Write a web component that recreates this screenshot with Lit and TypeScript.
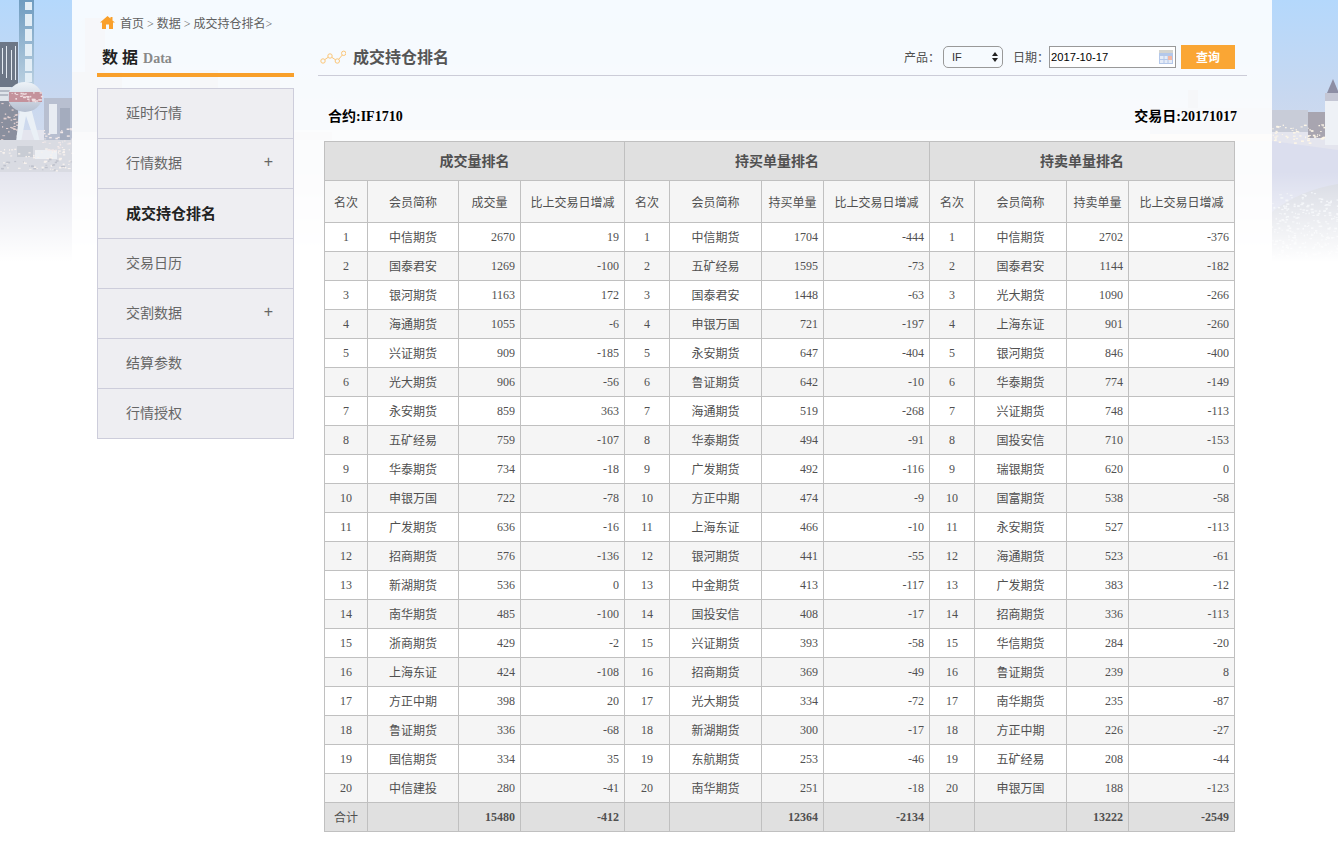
import { LitElement, html, css, svg } from 'lit';
import { customElement } from 'lit/decorators.js';

type Row = [string, number, number];

const VOLUME: Row[] = [
  ['中信期货', 2670, 19], ['国泰君安', 1269, -100], ['银河期货', 1163, 172], ['海通期货', 1055, -6],
  ['兴证期货', 909, -185], ['光大期货', 906, -56], ['永安期货', 859, 363], ['五矿经易', 759, -107],
  ['华泰期货', 734, -18], ['申银万国', 722, -78], ['广发期货', 636, -16], ['招商期货', 576, -136],
  ['新湖期货', 536, 0], ['南华期货', 485, -100], ['浙商期货', 429, -2], ['上海东证', 424, -108],
  ['方正中期', 398, 20], ['鲁证期货', 336, -68], ['国信期货', 334, 35], ['中信建投', 280, -41],
];
const BUY: Row[] = [
  ['中信期货', 1704, -444], ['五矿经易', 1595, -73], ['国泰君安', 1448, -63], ['申银万国', 721, -197],
  ['永安期货', 647, -404], ['鲁证期货', 642, -10], ['海通期货', 519, -268], ['华泰期货', 494, -91],
  ['广发期货', 492, -116], ['方正中期', 474, -9], ['上海东证', 466, -10], ['银河期货', 441, -55],
  ['中金期货', 413, -117], ['国投安信', 408, -17], ['兴证期货', 393, -58], ['招商期货', 369, -49],
  ['光大期货', 334, -72], ['新湖期货', 300, -17], ['东航期货', 253, -46], ['南华期货', 251, -18],
];
const SELL: Row[] = [
  ['中信期货', 2702, -376], ['国泰君安', 1144, -182], ['光大期货', 1090, -266], ['上海东证', 901, -260],
  ['银河期货', 846, -400], ['华泰期货', 774, -149], ['兴证期货', 748, -113], ['国投安信', 710, -153],
  ['瑞银期货', 620, 0], ['国富期货', 538, -58], ['永安期货', 527, -113], ['海通期货', 523, -61],
  ['广发期货', 383, -12], ['招商期货', 336, -113], ['华信期货', 284, -20], ['鲁证期货', 239, 8],
  ['南华期货', 235, -87], ['方正中期', 226, -27], ['五矿经易', 208, -44], ['申银万国', 188, -123],
];

const MENU = [
  { name: '延时行情' },
  { name: '行情数据', more: true },
  { name: '成交持仓排名', active: true },
  { name: '交易日历' },
  { name: '交割数据', more: true },
  { name: '结算参数' },
  { name: '行情授权' },
];

const COLS = [43, 91, 62, 104, 45, 92, 62, 106, 45, 92, 62, 106];

// speckle for the lit shore and the city lights
let seed = 7;
const rnd = () => {
  seed = (seed * 16807) % 2147483647;
  return seed / 2147483647;
};
const dots = (x0: number, x1: number, y0: number, y1: number, n: number, fill: string) => {
  const out = [];
  for (let i = 0; i < n; i++) {
    const x = x0 + rnd() * (x1 - x0);
    const y = y0 + rnd() * (y1 - y0);
    out.push(svg`<rect x=${x} y=${y} width=${1 + rnd() * 2} height=${0.8 + rnd()} fill=${fill} />`);
  }
  return out;
};

@customElement('app-root')
export class AppRoot extends LitElement {
  static styles = css`
    :host {
      display: block;
      position: relative;
      width: 1338px;
      height: 842px;
      overflow: hidden;
      background: #fff;
      font-family: 'Liberation Serif', 'Noto Sans CJK SC', serif;
      font-size: 12px;
      color: #505050;
    }
    :host * {
      box-sizing: border-box;
    }

    .scenery {
      position: absolute;
      left: 0;
      top: 0;
    }

    .panel {
      position: relative;
      width: 1200px;
      height: 842px;
      margin-left: 72px;
      padding: 0 25px;
      background: rgba(255, 255, 255, 0.86);
    }

    .crumbs {
      display: flex;
      align-items: center;
      height: 45px;
      padding: 0 0 0 3px;
      gap: 5px;
      color: #606060;
    }

    .layout {
      display: flex;
      gap: 24px;
    }

    .side {
      width: 197px;
      flex: none;
    }
    .side-title {
      height: 32px;
      padding: 2px 0 0 5px;
      border-bottom: 4px solid #f9a02b;
      font-size: 16px;
      font-weight: bold;
      color: #222;
      line-height: 22px;
    }
    .side-title span {
      margin-left: 1px;
      font-size: 14px;
      color: #888;
    }
    .menu {
      margin-top: 11px;
      border: 1px solid #cdcddb;
      border-bottom: 0;
      background: #eeeef2;
    }
    .menu-item {
      display: flex;
      justify-content: space-between;
      align-items: center;
      height: 50px;
      padding: 0 20px 3px 28px;
      border-bottom: 1px solid #cdcddb;
      font-size: 14px;
      color: #666;
    }
    .menu-item.active {
      font-size: 15px;
      font-weight: bold;
      color: #222;
    }
    .plus {
      font-family: 'Liberation Sans', sans-serif;
      font-size: 16px;
    }

    .main {
      width: 929px;
      flex: none;
    }
    .head {
      display: flex;
      align-items: center;
      height: 31px;
      padding: 0 12px 6px 2px;
      border-bottom: 1px solid #ccccd8;
    }
    .title {
      margin: -2px 0 0 7px;
      font-size: 16px;
      font-weight: bold;
      color: #555;
    }
    .filters {
      display: flex;
      align-items: center;
      margin-left: auto;
    }
    .select-wrap {
      position: relative;
      margin: 0 10px 0 3px;
    }
    select {
      display: block;
      appearance: none;
      width: 60px;
      height: 22px;
      padding: 0 0 0 8px;
      border: 1px solid #999;
      border-radius: 5px;
      background: transparent;
      font: 11px 'Liberation Sans', sans-serif;
      color: #333;
    }
    .arrows {
      position: absolute;
      right: 5px;
      top: 6px;
    }
    .date-wrap {
      position: relative;
      margin: 0 5px 0 0;
    }
    input {
      display: block;
      width: 127px;
      height: 22px;
      padding: 0 0 0 1px;
      border: 1px solid #999;
      background: #fff;
      font: 11.2px 'Liberation Sans', sans-serif;
      color: #000;
    }
    .cal {
      position: absolute;
      right: 3px;
      top: 4px;
    }
    button {
      width: 54px;
      height: 24px;
      padding: 0;
      border: 0;
      background: #faa634;
      color: #fff;
      font: bold 12px 'Liberation Serif', 'Noto Sans CJK SC', serif;
    }

    .meta {
      display: flex;
      justify-content: space-between;
      height: 65px;
      padding: 32px 10px 0 10px;
      font-size: 14px;
      font-weight: bold;
      line-height: 18px;
      color: #000;
    }

    table {
      width: 910px;
      margin-left: 6px;
      border-collapse: collapse;
      table-layout: fixed;
      background: #fff;
    }
    th,
    td {
      padding: 0;
      border: 1px solid #c0c0c0;
      text-align: center;
      font-weight: normal;
    }
    .group th {
      height: 39px;
      padding-bottom: 2px;
      background: #e0e0e0;
      font-size: 14px;
      font-weight: bold;
    }
    .cols th {
      height: 42px;
      padding-top: 1px;
      background: #f5f5f5;
    }
    tbody tr {
      height: 29px;
    }
    tbody tr:nth-child(even) {
      background: #f5f5f5;
    }
    td.num {
      padding-right: 5px;
      text-align: right;
    }
    .total td {
      background: #e0e0e0;
    }
    .total td.num {
      font-weight: bold;
    }
  `;

  renderScenery() {
    seed = 7;
    return html`<svg class="scenery" width="1338" height="270" viewBox="0 0 1338 270">
      <defs>
        <linearGradient id="sky" x1="0" y1="0" x2="0" y2="1">
          <stop offset="0" stop-color="#b4d8fc" />
          <stop offset="0.55" stop-color="#c8d8f0" />
          <stop offset="1" stop-color="#d8dcea" />
        </linearGradient>
        <linearGradient id="shaft" x1="0" y1="0" x2="0" y2="1">
          <stop offset="0" stop-color="#6f9cc0" />
          <stop offset="1" stop-color="#b9cfe0" />
        </linearGradient>
        <linearGradient id="ball" x1="0" y1="0" x2="0" y2="1">
          <stop offset="0" stop-color="#eef3f8" />
          <stop offset="1" stop-color="#b5bfd0" />
        </linearGradient>
        <linearGradient id="fade" x1="0" y1="0" x2="0" y2="1">
          <stop offset="0" stop-color="#fff" stop-opacity="0" />
          <stop offset="1" stop-color="#fff" />
        </linearGradient>
      </defs>
      <rect width="1338" height="175" fill="url(#sky)" />
      <rect y="130" width="1338" height="140" fill="#e4e5ee" />

      <!-- far skyline, mostly seen through the panel -->
      <g fill="#c0c8d6">
        <rect x="85" y="18" width="20" height="115" fill="#bcc8d8" />
        <rect x="72" y="72" width="50" height="68" />
        <rect x="122" y="100" width="30" height="40" />
        <rect x="190" y="70" width="28" height="45" />
        <rect x="240" y="80" width="40" height="35" />
        <rect x="1188" y="90" width="10" height="30" />
        <rect x="1150" y="108" width="122" height="28" fill="#ccd2de" />
      </g>
      <rect x="1272" y="110" width="36" height="22" fill="#c8ccd8" />
      <rect x="72" y="132" width="260" height="8" fill="#dcdde4" />

      <!-- pudong, left strip -->
      <rect x="44" y="98" width="28" height="46" fill="#b8bfd0" />
      <rect x="49" y="104" width="8" height="30" fill="#e8ecf2" />
      <rect x="60" y="108" width="10" height="34" fill="#a4acbe" />
      <rect x="0" y="42" width="18" height="45" fill="#6d7787" />
      <g fill="#e4eaf2">
        <rect x="2" y="48" width="1" height="26" />
        <rect x="6" y="46" width="1" height="32" />
        <rect x="11" y="50" width="1" height="30" />
        <rect x="15" y="46" width="1" height="34" />
      </g>
      <rect x="0" y="87" width="11" height="14" fill="#dfe4ea" />
      <path d="M0 91 H10 M0 95 H10" stroke="#8a92a2" stroke-width="1" />
      <rect x="0" y="101" width="18" height="60" fill="#8a8f9e" />
      <g>${dots(0, 18, 103, 150, 45, '#e3d0d0')}</g>
      <path d="M19 84 L19 0 L34 0 L34 84 Z" fill="url(#shaft)" />
      <g fill="#e3eef6">
        <rect x="25" y="2" width="7" height="8" />
        <rect x="25" y="14" width="7" height="12" />
        <rect x="25" y="29" width="7" height="12" />
        <rect x="25" y="44" width="7" height="12" />
        <rect x="25" y="59" width="7" height="12" />
        <rect x="25" y="73" width="7" height="9" />
      </g>
      <path d="M20 108 L16 142 H21 L26 116 L35 142 H40 L31 108 Z" fill="#eaf0f6" />
      <ellipse cx="25" cy="97" rx="17" ry="15" fill="url(#ball)" />
      <rect x="9" y="92" width="33" height="10" fill="#c4929c" />
      <g>${dots(9, 41, 92, 101, 30, '#f0dfe2')}</g>
      <rect x="0" y="140" width="72" height="32" fill="#d9dbe2" />
      <rect x="17" y="146" width="16" height="11" fill="#c8ccd4" />
      <rect x="35" y="150" width="22" height="9" fill="#edf0f4" />
      <g>${dots(0, 72, 148, 171, 60, '#f8f2ee')}</g>
      <g>${dots(0, 72, 158, 170, 24, '#bfc2cc')}</g>
      <g>${dots(40, 72, 128, 150, 30, '#f4eaea')}</g>

      <!-- bund side, right strip -->
      <rect x="1308" y="112" width="17" height="26" fill="#a8a5b0" />
      <rect x="1325" y="93" width="13" height="52" fill="#eef1f6" />
      <path d="M1327 93 L1333 79 L1338 91 V93 Z" fill="#8d8ea4" />
      <rect x="1325" y="93" width="13" height="8" fill="#c4c6d4" />
      <path d="M1272 141 L1338 150 V220 H1272 Z" fill="#dbdeee" />
      <path d="M1150 134 H1272 V141 H1150 Z" fill="#eee8e4" />
      <g>${dots(1272, 1325, 124, 143, 60, '#fdf6e8')}</g>
      <path d="M1272 212 Q1300 190 1338 184 V270 H1272 Z" fill="#d6d9e2" />
      <g>${dots(1272, 1338, 192, 258, 220, '#eef1f6')}</g>

      <rect y="172" width="1338" height="90" fill="url(#fade)" />
      <rect y="262" width="1338" height="8" fill="#fff" />
    </svg>`;
  }

  renderHome() {
    return html`<svg width="15" height="13" viewBox="0 0 15 13">
      <path
        d="M7.5 0 L0 6.5 H2 V13 H6 V8.5 H9 V13 H13 V6.5 H15 L12.5 4.4 V1 H10.5 V2.6 Z"
        fill="#f9a02b"
      />
    </svg>`;
  }

  renderTrend() {
    return html`<svg width="26" height="14" viewBox="0 0 26 14" fill="none" stroke="#fbc678" stroke-width="1">
      <circle cx="3" cy="11" r="2.2" />
      <circle cx="10" cy="6" r="2.2" />
      <circle cx="17.3" cy="11" r="2.2" />
      <circle cx="23.7" cy="3.3" r="2.2" />
      <path d="M4.8 9.6 L8.3 7.2 M11.8 7.3 L15.5 9.8 M18.7 9.3 L22.3 5" />
    </svg>`;
  }

  renderCalendar() {
    return html`<svg class="cal" width="14" height="14" viewBox="0 0 14 14">
      <rect x="0" y="0" width="14" height="3" fill="#d4d4cf" />
      <rect x="0" y="3" width="14" height="11" fill="#b4c8ea" />
      <rect x="1" y="6" width="12" height="7" fill="#e6ecf7" />
      <path d="M5 6 V13 M9 6 V13 M1 9.5 H13" stroke="#b4c8ea" stroke-width="1" />
      <rect x="9" y="6" width="4" height="4" fill="#f3b8a4" />
    </svg>`;
  }

  renderColumns(qty: string) {
    return html`<th>名次</th>
      <th>会员简称</th>
      <th>${qty}</th>
      <th>比上交易日增减</th>`;
  }

  renderCells(rank: number, r: Row) {
    return html`<td>${rank}</td>
      <td>${r[0]}</td>
      <td class="num">${r[1]}</td>
      <td class="num">${r[2]}</td>`;
  }

  renderTotals(qty: number, diff: number, first = false) {
    return html`<td>${first ? '合计' : ''}</td>
      <td></td>
      <td class="num">${qty}</td>
      <td class="num">${diff}</td>`;
  }

  render() {
    return html`
      ${this.renderScenery()}
      <div class="panel">
        <div class="crumbs">${this.renderHome()}<span>首页 &gt; 数据 &gt; 成交持仓排名&gt;</span></div>
        <div class="layout">
          <div class="side">
            <div class="side-title">数 据 <span>Data</span></div>
            <div class="menu">
              ${MENU.map(
                (m) => html`<div class="menu-item ${m.active ? 'active' : ''}">
                  <span>${m.name}</span>${m.more ? html`<span class="plus">+</span>` : ''}
                </div>`,
              )}
            </div>
          </div>
          <div class="main">
            <div class="head">
              ${this.renderTrend()}
              <span class="title">成交持仓排名</span>
              <div class="filters">
                <span>产品：</span>
                <div class="select-wrap">
                  <select><option>IF</option></select>
                  <svg class="arrows" width="6" height="10" viewBox="0 0 6 10" fill="#222">
                    <path d="M3 0 L6 4 H0 Z M3 10 L0 6 H6 Z" />
                  </svg>
                </div>
                <span>日期：</span>
                <div class="date-wrap">
                  <input value="2017-10-17" />
                  ${this.renderCalendar()}
                </div>
                <button>查询</button>
              </div>
            </div>
            <div class="meta">
              <span>合约:IF1710</span>
              <span>交易日:20171017</span>
            </div>
            <table>
              <colgroup>${COLS.map((w) => html`<col style="width:${w}px" />`)}</colgroup>
              <thead>
                <tr class="group">
                  <th colspan="4">成交量排名</th>
                  <th colspan="4">持买单量排名</th>
                  <th colspan="4">持卖单量排名</th>
                </tr>
                <tr class="cols">
                  ${this.renderColumns('成交量')}${this.renderColumns('持买单量')}${this.renderColumns('持卖单量')}
                </tr>
              </thead>
              <tbody>
                ${VOLUME.map(
                  (r, i) => html`<tr>
                    ${this.renderCells(i + 1, r)}${this.renderCells(i + 1, BUY[i])}${this.renderCells(i + 1, SELL[i])}
                  </tr>`,
                )}
                <tr class="total">
                  ${this.renderTotals(15480, -412, true)}${this.renderTotals(12364, -2134)}${this.renderTotals(13222, -2549)}
                </tr>
              </tbody>
            </table>
          </div>
        </div>
      </div>
    `;
  }
}
